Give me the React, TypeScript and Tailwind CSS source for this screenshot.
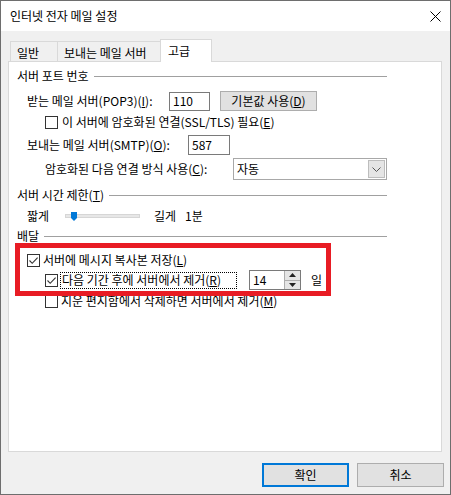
function Check({ checked }: { checked?: boolean }) {
  return (
    <span className="w-[13px] h-[13px] border border-[#333333] bg-white flex items-center justify-center shrink-0">
      {checked && (
        <svg width="11" height="11" viewBox="0 0 11 11">
          <path d="M1.5 5.5 L4.2 8.3 L9.6 2.6" fill="none" stroke="#333333" strokeWidth="1.1" />
        </svg>
      )}
    </span>
  );
}

function Header({ label }: { label: React.ReactNode }) {
  return (
    <div className="flex items-center pl-[8px] pr-[54px]">
      <span className="whitespace-nowrap">{label}</span>
      <div className="flex-1 h-px bg-[#a0a0a0] ml-[5px]" />
    </div>
  );
}

export default function App() {
  return (
    <div className="w-[451px] h-[495px] border border-[#6e6e6e] bg-[#f0f0f0] flex flex-col font-['Noto_Sans_CJK_KR',sans-serif] text-[12px] leading-[16px] text-black overflow-hidden">
      {/* title bar */}
      <div className="h-[30px] bg-white flex items-center justify-between pl-[9px] pr-[9px] shrink-0">
        <span>인터넷 전자 메일 설정</span>
        <svg width="11" height="11" viewBox="0 0 11 11">
          <path d="M0.5 0.5 L10.5 10.5 M10.5 0.5 L0.5 10.5" stroke="#000" strokeWidth="1" />
        </svg>
      </div>

      {/* tabs */}
      <div className="mt-[8px] ml-[7px] h-[22px] flex items-end pl-[2px] shrink-0">
        <div className="w-[48px] h-[20px] border border-b-0 border-[#d9d9d9] flex items-center pl-[6px] pt-[3px]">일반</div>
        <div className="w-[102px] h-[20px] border-t border-[#d9d9d9] flex items-center pl-[6px] pt-[3px] whitespace-nowrap">보내는 메일 서버</div>
        <div className="relative z-10 -mb-px w-[52px] h-[23px] bg-white border border-b-0 border-[#d9d9d9] flex items-center pl-[7px]">고급</div>
      </div>

      {/* panel */}
      <div className="relative ml-[7px] w-[434px] h-[391px] bg-white border border-[#d9d9d9] flex flex-col shrink-0">
        <div className="h-[28px] flex items-center">
          <div className="w-full"><Header label="서버 포트 번호" /></div>
        </div>

        <div className="h-[22px] flex items-center pl-[18px]">
          <span className="w-[142px] whitespace-nowrap">받는 메일 서버(POP3)(<u>I</u>):</span>
          <div className="w-[41px] h-[19px] border border-[#7a7a7a] flex items-center pl-[3px]">110</div>
          <div className="ml-[10px] w-[97px] h-[20px] bg-[#e1e1e1] border border-[#adadad] flex items-center justify-center whitespace-nowrap">기본값 사용(<u>D</u>)</div>
        </div>

        <div className="h-[20px] flex items-center pl-[36px] gap-[4px]">
          <Check />
          <span className="whitespace-nowrap">이 서버에 암호화된 연결(SSL/TLS) 필요(<u>E</u>)</span>
        </div>

        <div className="h-[26px] flex items-center pl-[18px]">
          <span className="w-[161px] whitespace-nowrap">보내는 메일 서버(SMTP)(<u>O</u>):</span>
          <div className="w-[42px] h-[20px] border border-[#7a7a7a] flex items-center pl-[3px]">587</div>
        </div>

        <div className="h-[22px] flex items-center pl-[36px]">
          <span className="w-[188px] whitespace-nowrap">암호화된 다음 연결 방식 사용(<u>C</u>):</span>
          <div className="w-[154px] h-[22px] border border-[#a8a8a8] flex items-center justify-between pl-[3px] pr-px">
            <span>자동</span>
            <div className="w-[17px] h-[18px] bg-[#e5e5e5] border border-[#bdbdbd] flex items-center justify-center">
              <svg width="9" height="5" viewBox="0 0 9 5">
                <path d="M0.5 0.5 L4.5 4.5 L8.5 0.5" fill="none" stroke="#555" strokeWidth="1" />
              </svg>
            </div>
          </div>
        </div>

        <div className="h-[30px] flex items-center">
          <div className="w-full"><Header label={<>서버 시간 제한(<u>T</u>)</>} /></div>
        </div>

        <div className="h-[12px] flex items-center pl-[18px]">
          <span className="w-[38px] whitespace-nowrap">짧게</span>
          <div className="relative w-[75px] h-[4px] bg-[#e7e7e7] border border-[#d6d6d6]">
            <svg className="absolute left-[5px] -top-[3px]" width="6" height="9" viewBox="0 0 6 9">
              <path d="M0 0 H6 V6 L3 9 L0 6 Z" fill="#0078d7" />
            </svg>
          </div>
          <span className="ml-[14px] whitespace-nowrap">길게</span>
          <span className="ml-[9px] whitespace-nowrap">1분</span>
        </div>

        <div className="h-[28px] flex items-center">
          <div className="w-full"><Header label="배달" /></div>
        </div>

        <div className="h-[20px] flex items-center pl-[18px] gap-[3px]">
          <Check checked />
          <span className="whitespace-nowrap">서버에 메시지 복사본 저장(<u>L</u>)</span>
        </div>

        <div className="h-[20px] flex items-center pl-[36px]">
          <Check checked />
          <span className="ml-[2px] w-[177px] border border-dotted border-black px-px h-[17px] flex items-center whitespace-nowrap">다음 기간 후에 서버에서 제거(<u>R</u>)</span>
          <div className="ml-[12px] w-[52px] h-[20px] border border-[#7a7a7a] flex items-center justify-between pl-[3px]">
            <span>14</span>
            <div className="w-[16px] h-[18px] bg-[#e5e5e5] border-l border-[#adadad] flex flex-col">
              <div className="flex-1 flex items-center justify-center border-b border-[#adadad]">
                <svg width="7" height="4" viewBox="0 0 7 4"><path d="M0 4 L3.5 0 L7 4 Z" fill="#222" /></svg>
              </div>
              <div className="flex-1 flex items-center justify-center">
                <svg width="7" height="4" viewBox="0 0 7 4"><path d="M0 0 L3.5 4 L7 0 Z" fill="#222" /></svg>
              </div>
            </div>
          </div>
          <span className="ml-[10px]">일</span>
        </div>

        <div className="h-[22px] flex items-center pl-[36px] gap-[3px]">
          <Check />
          <span className="whitespace-nowrap">지운 편지함에서 삭제하면 서버에서 제거(<u>M</u>)</span>
        </div>

        {/* annotation overlay */}
        <div className="absolute left-[6px] top-[181px] w-[316px] h-[53px] border-[5px] border-[#e81c24] pointer-events-none" />
      </div>

      {/* buttons */}
      <div className="mt-[11px] flex justify-end gap-[8px] pr-[6px] shrink-0">
        <div className="w-[87px] h-[24px] bg-[#e1e1e1] border-2 border-[#0078d7] flex items-center justify-center">확인</div>
        <div className="w-[87px] h-[24px] bg-[#e1e1e1] border border-[#adadad] flex items-center justify-center">취소</div>
      </div>
    </div>
  );
}
